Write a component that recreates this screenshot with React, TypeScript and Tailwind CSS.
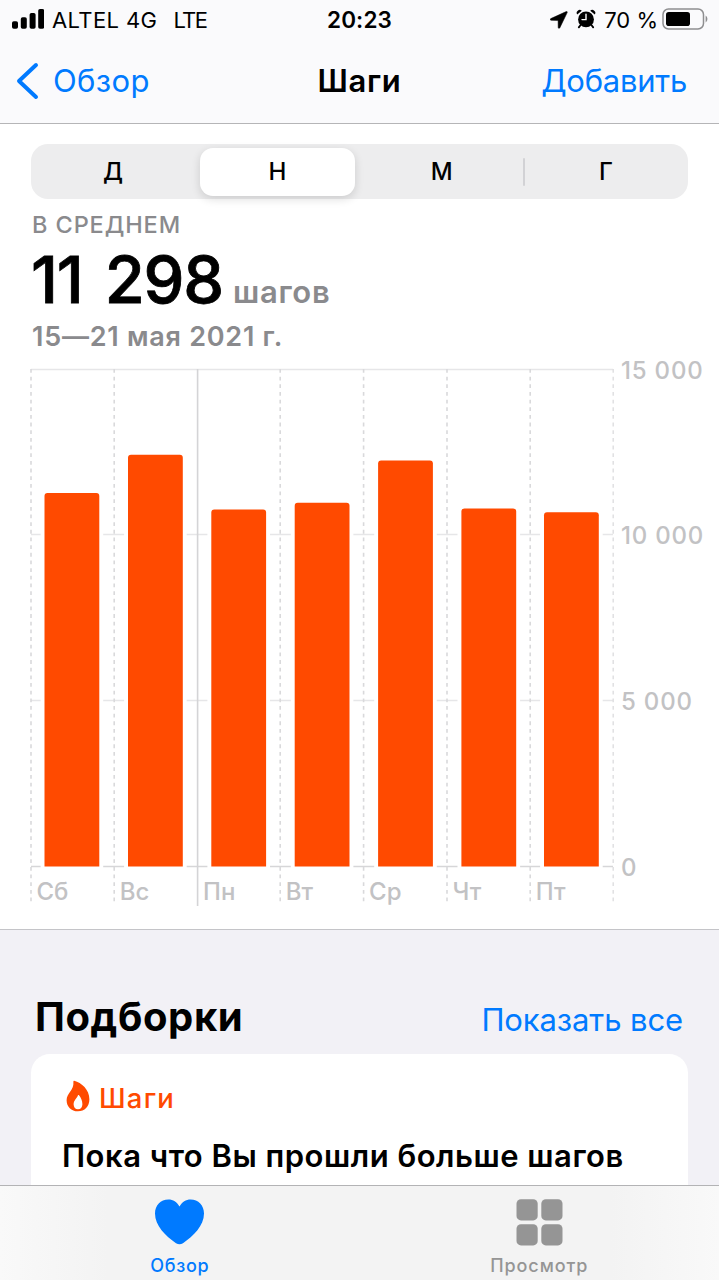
import { useState } from 'react'
import clsx from 'clsx'

interface DayEntry {
  label: string
  x: number
  barX: number
  top: number
}

const days: DayEntry[] = [
  { label: 'Сб', x: 31, barX: 44.5, top: 493 },
  { label: 'Вс', x: 114.2, barX: 128, top: 454.8 },
  { label: 'Пн', x: 197.6, barX: 211.3, top: 509.5 },
  { label: 'Вт', x: 280.2, barX: 294.7, top: 502.7 },
  { label: 'Ср', x: 363.6, barX: 378.1, top: 460.5 },
  { label: 'Чт', x: 447, barX: 461.4, top: 508.5 },
  { label: 'Пт', x: 530.2, barX: 544, top: 512.3 }
]

const gridLines = [
  { label: '15 000', y: 369.5 },
  { label: '10 000', y: 534.5 },
  { label: '5 000', y: 700.5 },
  { label: '0', y: 866.5 }
]

const CHART_BOTTOM = 866.5

function StatusBar() {
  return (
    <div className="flex h-10 items-center justify-between pr-[11px] pl-3 text-[22px] leading-none">
      <div className="flex w-[259px] items-center">
        <svg width="32" height="20" viewBox="0 0 32 20" className="-mt-0.5">
          <rect x="0" y="12.3" width="6" height="7.5" rx="1.8" />
          <rect x="8.8" y="8.2" width="6" height="11.6" rx="1.8" />
          <rect x="17.6" y="4" width="6" height="15.8" rx="1.8" />
          <rect x="26.2" y="0" width="6" height="19.8" rx="1.8" />
        </svg>
        <span className="ml-2 tracking-[0.4px] whitespace-nowrap">ALTEL 4G</span>
        <span className="ml-4 tracking-[-1.6px]">LTE</span>
      </div>
      <span className="text-[22.5px] font-semibold tracking-[0.1px]">20:23</span>
      <div className="flex w-[260px] items-center justify-end">
        <svg width="18" height="18" viewBox="0 0 18 18">
          <path d="M16.2.6.8 7.6c-1 .5-.7 1.7.3 1.7l6.6.1c.3 0 .4.1.4.4l.1 6.6c0 1 1.2 1.3 1.7.3L17.2 1.6c.4-.8-.2-1.4-1-1z" stroke="#000" strokeWidth="0.5" />
        </svg>
        <svg width="20" height="20" viewBox="0 0 20 20" className="-mt-0.5 ml-2">
          <circle cx="10" cy="10.4" r="7.9" />
          <path d="M1.2 5.6a3 3 0 0 1 4.6-3.8z" />
          <path d="M18.8 5.6a3 3 0 0 0-4.6-3.8z" />
          <path d="m4.6 16-1.8 2.4M15.4 16l1.8 2.4" stroke="#000" strokeWidth="1.8" strokeLinecap="round" />
          <path d="M10 5.2v5.4H6" fill="none" stroke="#fff" strokeWidth="1.4" strokeLinecap="round" />
        </svg>
        <span className="ml-2 whitespace-nowrap">70 %</span>
        <svg width="46" height="22" viewBox="0 0 46 22" className="-mt-0.5 ml-1">
          <rect x="1" y="1" width="40.5" height="20" rx="5.5" fill="none" stroke="#8e8e90" strokeWidth="1.5" />
          <rect x="4" y="4" width="24" height="14" rx="2.8" />
          <path d="M43.6 7.6c2.4 1.4 2.4 5.4 0 6.8z" fill="#8e8e90" />
        </svg>
      </div>
    </div>
  )
}

function NavBar() {
  return (
    <div className="grid h-[84px] grid-cols-[1fr_auto_1fr] items-center border-b border-[#b5b5b7] px-4 text-[31px]">
      <div className="flex items-center text-[#007aff]">
        <svg width="24" height="38" viewBox="0 0 24 38" fill="none" stroke="#007aff" strokeWidth="4" strokeLinecap="round" strokeLinejoin="round" className="-mt-0.5">
          <path d="M20 3 3 19l17 16" />
        </svg>
        <span className="ml-[13px] tracking-[0.4px]">Обзор</span>
      </div>
      <span className="text-center font-semibold tracking-[0.7px]">Шаги</span>
      <span className="pr-4 text-right tracking-[-0.25px] text-[#007aff]">Добавить</span>
    </div>
  )
}

function PeriodPicker() {
  const periods = ['Д', 'Н', 'М', 'Г']
  const [active, setActive] = useState('Н')

  return (
    <div className="grid h-[55px] grid-cols-4 items-center rounded-[17px] bg-[#ededee]">
      {periods.map((period, i) => (
        <div key={period} className="relative flex">
          {i === 3 && <div className="absolute top-2.5 -left-px h-7 w-0.5 rounded bg-[#d2d2d5]" />}
          <button
            onClick={() => setActive(period)}
            className={clsx(
              'mx-[4.4px] h-12 flex-1 rounded-[13px] text-[24px] font-medium',
              period === active && 'bg-white shadow-[0_3px_10px_rgba(0,0,0,0.14)]'
            )}
          >
            {period}
          </button>
        </div>
      ))}
    </div>
  )
}

function Summary() {
  return (
    <div className="font-semibold text-[#8a8a8d]">
      <div className="mt-[11px] h-[30px] pl-px text-[23.5px] leading-[30px] font-medium tracking-[0.9px]">В СРЕДНЕМ</div>
      <div className="flex h-20 items-baseline leading-[80px]">
        <span className="text-[65px] font-medium tracking-[-1.2px] text-black [-webkit-text-stroke:0.8px_#000] [word-spacing:6px]">
          11 298
        </span>
        <span className="ml-2.5 text-[31px] tracking-[0.7px]">шагов</span>
      </div>
      <div className="h-[34px] pl-px text-[27px] leading-[34px] tracking-[0.75px]">15—21 мая 2021 г.</div>
    </div>
  )
}

function StepsChart() {
  return (
    <svg width="719" height="560" viewBox="0 350 719 560" className="block">
      {gridLines.map((line) => (
        <g key={line.label}>
          <path d={`M31 ${line.y}H613`} stroke={line.label === '0' ? '#d6d6d8' : '#e6e6e8'} strokeWidth="1.5" />
          <text x="621" y={line.y + 9} className="fill-[#c2c2c4] text-[24px] font-medium tracking-[0.8px]">
            {line.label}
          </text>
        </g>
      ))}

      {/* the week starts on Monday, so that divider is solid */}
      {days.map((day) => (
        <path
          key={day.label}
          d={`M${day.x} 369V${day.label === 'Пн' ? 906 : 903}`}
          stroke={day.label === 'Пн' ? '#d4d4d6' : '#d9d9db'}
          strokeWidth="1.6"
          strokeDasharray={day.label === 'Пн' ? undefined : '3.8 3.86'}
        />
      ))}
      <path d="M613.2 369V903" stroke="#dedee0" strokeWidth="1.4" strokeDasharray="3.8 3.86" />

      {days.map((day) => (
        <g key={day.label}>
          <rect x={day.barX - 3.9} y={day.top - 3} width="62.6" height={CHART_BOTTOM - day.top + 4.5} fill="#fff" />
          <path
            d={`M${day.barX} ${CHART_BOTTOM}V${day.top + 3}q0-3 3-3h48.8q3 0 3 3V${CHART_BOTTOM}z`}
            fill="#ff4a00"
          />
          <text x={day.x + 5.5} y="900" className="fill-[#c2c2c4] text-[24px] font-medium">
            {day.label}
          </text>
        </g>
      ))}
    </svg>
  )
}

function Highlights() {
  return (
    <section className="flex-1 overflow-hidden border-t border-[#c4c4c8] bg-[#f2f1f6] px-[31px]">
      <div className="mt-[62px] flex h-[50px] items-center justify-between pr-[5px] pl-1">
        <h2 className="text-[40px] font-bold tracking-[0.6px]">Подборки</h2>
        <span className="mt-1.5 text-[31px] tracking-[-0.1px] text-[#007aff]">Показать все</span>
      </div>
      <div className="mt-3 h-40 rounded-t-[19px] bg-white px-[31px] pt-6">
        <div className="flex h-9 items-center text-[27.5px] font-medium text-[#ff4a00]">
          <svg width="24" height="32" viewBox="0 0 24 32" className="ml-1">
            <path
              fillRule="evenodd"
              fill="#ff4a00"
              d="M8.2.8C15.5 2.6 23.4 9.8 23.4 19.2 23.4 26.4 18.6 31.3 12 31.3 5.2 31.3.6 26.6.6 20.2.6 12.8 8.2 10.6 7.4 1.4 7.4.9 7.7.7 8.2.8zM12 15.200C11.200 17.800 7.600 20.400 7.600 24.200 7.600 27.200 9.400 29.200 12 29.200S16.400 27.200 16.400 24.200C16.400 20.600 14.800 17.200 13 15.200 12.600 14.800 12.200 14.800 12 15.200z"
            />
          </svg>
          <span className="mt-[5px] ml-[9px] tracking-[1.2px]">Шаги</span>
        </div>
        <p className="mt-5 text-[31px] leading-[44px] font-semibold tracking-[0.5px] whitespace-nowrap">
          Пока что Вы прошли больше шагов
        </p>
      </div>
    </section>
  )
}

function TabBar() {
  return (
    <nav className="grid h-[95px] shrink-0 grid-cols-2 border-t border-[#b3b3b5] bg-[linear-gradient(90deg,#f9f9f9,#f3f3f3_15%,#f3f3f3_85%,#f9f9f9)] text-[18px] font-medium">
      <div className="flex flex-col items-center pt-3 text-[#007aff]">
        <svg width="50" height="48" viewBox="0.5 0 50 48" fill="#007aff">
          <path d="M25 8.5C22.5 4 18.5 1.5 14 1.5 6 1.5.5 7.5.5 15.5.5 27.5 11 38 21.5 45.2 24 46.7 26 46.7 28.5 45.2 39 38 49.5 27.5 49.5 15.5 49.5 7.5 44 1.5 36 1.5 31.500 1.500 27.500 4 25 8.500z" />
        </svg>
        <span className="mt-2 leading-6 tracking-[0.7px]">Обзор</span>
      </div>
      <div className="flex flex-col items-center pt-3 text-[#959595]">
        <svg width="48" height="48" viewBox="0 0 48 48" fill="#959595">
          <rect x="1.5" y="1.2" width="21.2" height="21.2" rx="4.5" />
          <rect x="26.3" y="1.2" width="21.2" height="21.2" rx="4.5" />
          <rect x="1.5" y="26.2" width="21.2" height="21.2" rx="4.5" />
          <rect x="26.3" y="26.2" width="21.2" height="21.2" rx="4.5" />
        </svg>
        <span className="mt-2 leading-6 tracking-[0.9px]">Просмотр</span>
      </div>
    </nav>
  )
}

export default function App() {
  return (
    <div className="flex h-[1280px] w-[719px] flex-col overflow-hidden bg-white font-['Inter',sans-serif] text-black">
      <header className="h-[124px] shrink-0 bg-[#fafafc]">
        <StatusBar />
        <NavBar />
      </header>
      <main className="h-[805px] shrink-0">
        <div className="h-[226px] px-[31px] pt-5">
          <PeriodPicker />
          <Summary />
        </div>
        <StepsChart />
      </main>
      <Highlights />
      <TabBar />
    </div>
  )
}
